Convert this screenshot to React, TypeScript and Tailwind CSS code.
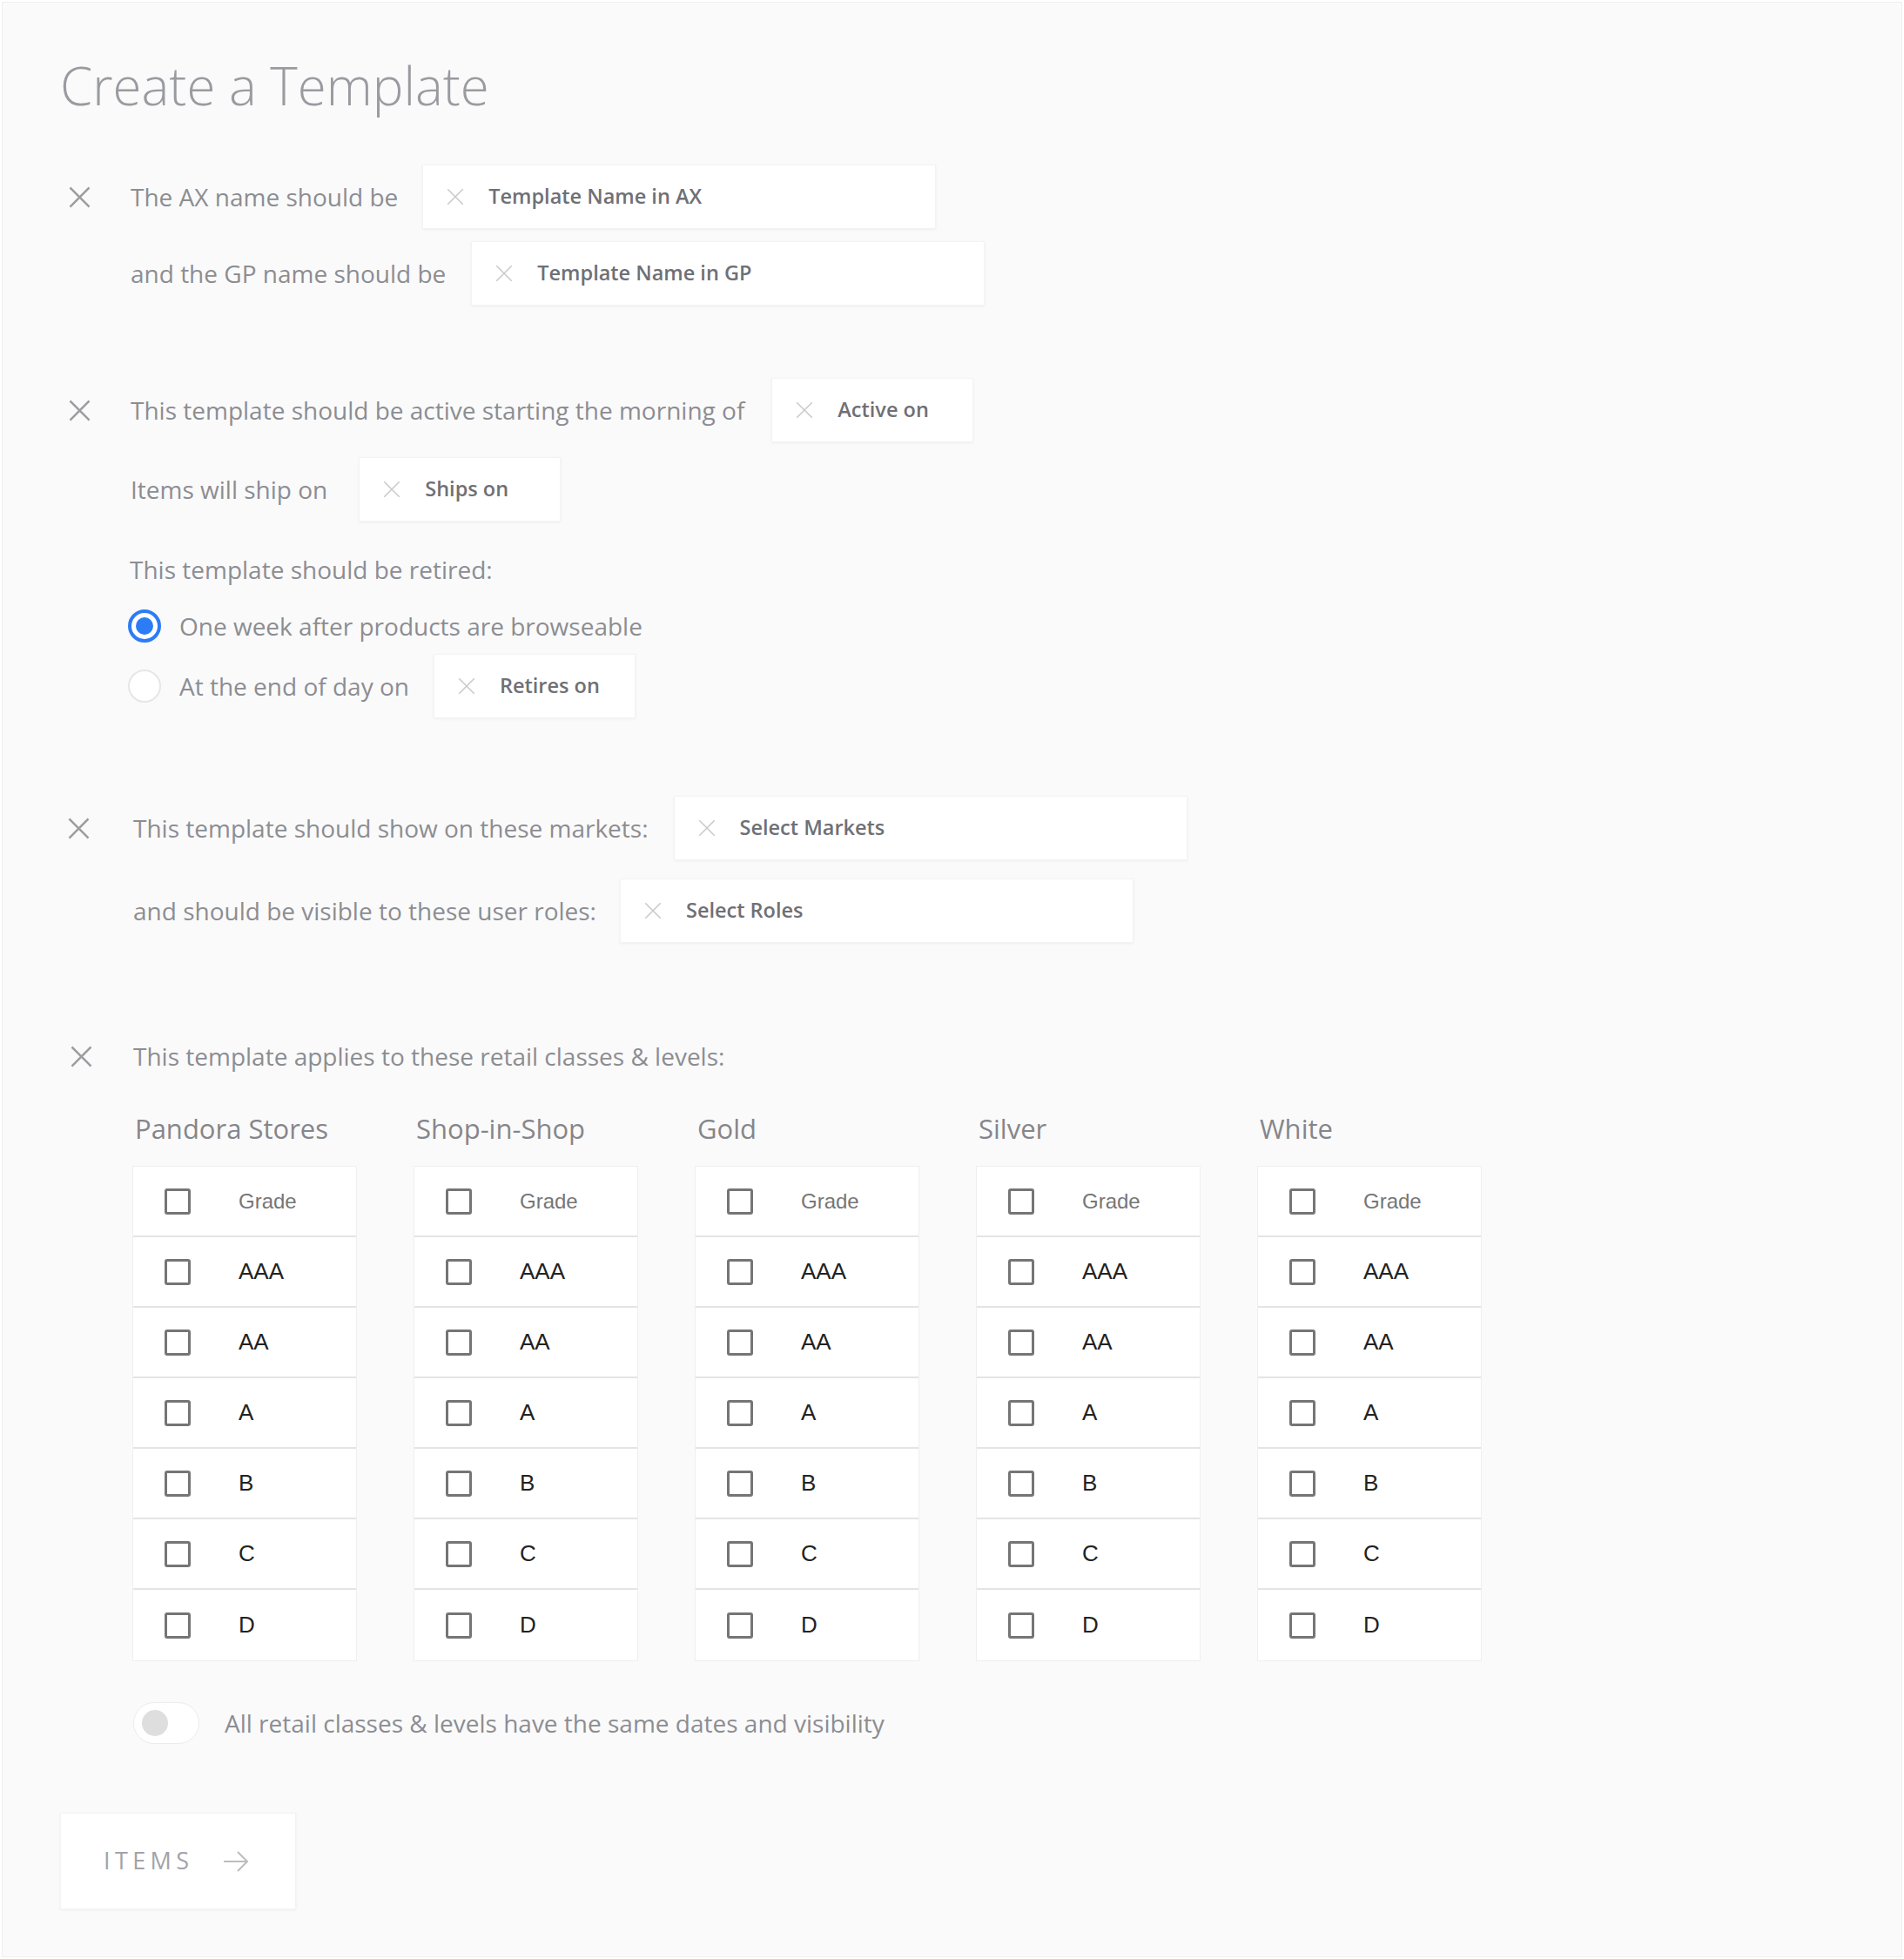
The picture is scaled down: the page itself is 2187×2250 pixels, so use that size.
import React from "react"

const sans = "font-['Open_Sans',sans-serif]"

function CrossIcon({ className }: { className?: string }) {
  return (
    <svg viewBox="0 0 24 24" className={className} fill="none" stroke="currentColor" strokeLinecap="square">
      <path d="M3 3 L21 21 M21 3 L3 21" />
    </svg>
  )
}

function Field({ label, width }: { label: string; width: string }) {
  return (
    <div className={`${width} h-[74px] bg-white flex items-center pl-[26px] shadow-[0_1px_3px_rgba(0,0,0,0.05)] border border-[#f3f3f3]`}>
      <CrossIcon className="w-[22px] h-[22px] text-[#c9c9cc] [stroke-width:1.6]" />
      <span className="ml-[27px] text-[23.5px] font-semibold text-[#6f7075]">{label}</span>
    </div>
  )
}

function SectionX({ pad }: { pad: string }) {
  return (
    <div className={`${pad} shrink-0 flex items-center`}>
      <CrossIcon className="w-[27px] h-[27px] text-[#9c9da1] [stroke-width:2.2]" />
    </div>
  )
}

const grades = ["AAA", "AA", "A", "B", "C", "D"]
const classes = ["Pandora Stores", "Shop-in-Shop", "Gold", "Silver", "White"]

function GradeTable({ title }: { title: string }) {
  return (
    <div className="w-[258px]">
      <div className="h-[40px] flex items-center pl-[3px] text-[31px] text-[#85868b]">{title}</div>
      <div className="mt-[23px] bg-white border border-[#efefef]">
        <div className="h-[81px] flex items-center pl-[36px] border-b-2 border-[#e4e4e4]">
          <span className="w-[30px] h-[30px] rounded-[3px] border-[3px] border-[#757575] shrink-0" />
          <span className="ml-[55px] text-[24px] text-[#767676] font-['Liberation_Sans',sans-serif]">Grade</span>
        </div>
        {grades.map((g, i) => (
          <div
            key={g}
            className={`h-[81px] flex items-center pl-[36px] ${i < grades.length - 1 ? "border-b-2 border-[#e4e4e4]" : ""}`}
          >
            <span className="w-[30px] h-[30px] rounded-[3px] border-[3px] border-[#757575] shrink-0" />
            <span className="ml-[55px] text-[26px] text-[#222] font-['Liberation_Sans',sans-serif]">{g}</span>
          </div>
        ))}
      </div>
    </div>
  )
}

export default function App() {
  return (
    <div className={`bg-white p-[2px] ${sans}`}>
      <div className="min-h-[2246px] bg-[#fafafa] border border-[#efefef] pl-[66px] pt-[59px] pb-[50px] text-[28px] text-[#8c8d92]">
        <h1 className="text-[60px] leading-[72px] font-light text-[#9a9ba0]">Create a Template</h1>

        {/* AX / GP names */}
        <div className="mt-[55px] h-[74px] flex items-center">
          <SectionX pad="w-[81px] pl-[9px]" />
          <span>The AX name should be</span>
          <div className="ml-[28px]">
            <Field label="Template Name in AX" width="w-[590px]" />
          </div>
        </div>
        <div className="mt-[14px] h-[74px] flex items-center pl-[81px]">
          <span>and the GP name should be</span>
          <div className="ml-[29px]">
            <Field label="Template Name in GP" width="w-[590px]" />
          </div>
        </div>

        {/* Dates */}
        <div className="mt-[83px] h-[74px] flex items-center">
          <SectionX pad="w-[81px] pl-[9px]" />
          <span>This template should be active starting the morning of</span>
          <div className="ml-[31px]">
            <Field label="Active on" width="w-[232px]" />
          </div>
        </div>
        <div className="mt-[17px] h-[74px] flex items-center pl-[81px]">
          <span>Items will ship on</span>
          <div className="ml-[36px]">
            <Field label="Ships on" width="w-[232px]" />
          </div>
        </div>
        <div className="mt-[35px] h-[40px] flex items-center pl-[80px]">This template should be retired:</div>
        <div className="mt-[25px] h-[40px] flex items-center pl-[78px]">
          <span className="w-[38px] h-[38px] rounded-full border-[4px] border-[#2c7cf6] bg-white flex items-center justify-center">
            <span className="w-[20px] h-[20px] rounded-full bg-[#2c7cf6]" />
          </span>
          <span className="ml-[21px]">One week after products are browseable</span>
        </div>
        <div className="mt-[12px] h-[74px] flex items-center pl-[78px]">
          <span className="w-[38px] h-[38px] rounded-full border-2 border-[#e6e6e6] bg-white" />
          <span className="ml-[21px]">At the end of day on</span>
          <div className="ml-[28px]">
            <Field label="Retires on" width="w-[232px]" />
          </div>
        </div>

        {/* Markets / roles */}
        <div className="mt-[89px] h-[74px] flex items-center">
          <SectionX pad="w-[84px] pl-[8px]" />
          <span>This template should show on these markets:</span>
          <div className="ml-[29px]">
            <Field label="Select Markets" width="w-[590px]" />
          </div>
        </div>
        <div className="mt-[21px] h-[74px] flex items-center pl-[84px]">
          <span>and should be visible to these user roles:</span>
          <div className="ml-[27px]">
            <Field label="Select Roles" width="w-[590px]" />
          </div>
        </div>

        {/* Retail classes */}
        <div className="mt-[110px] h-[40px] flex items-center">
          <SectionX pad="w-[84px] pl-[11px]" />
          <span>This template applies to these retail classes &amp; levels:</span>
        </div>
        <div className="mt-[43px] pl-[83px] flex gap-[65px]">
          {classes.map((c) => (
            <GradeTable key={c} title={c} />
          ))}
        </div>

        <div className="mt-[47px] pl-[84px] flex items-center">
          <span className="w-[76px] h-[48px] rounded-full bg-white border border-[#ececec] flex items-center pl-[9px]">
            <span className="w-[30px] h-[30px] rounded-full bg-[#dedede]" />
          </span>
          <span className="ml-[29px]">All retail classes &amp; levels have the same dates and visibility</span>
        </div>

        <button className="mt-[79px] w-[271px] h-[111px] bg-white shadow-[0_1px_3px_rgba(0,0,0,0.05)] border border-[#f3f3f3] flex items-center pl-[49px]">
          <span className="text-[27px] tracking-[0.2em] text-[#a2a3a8]">ITEMS</span>
          <svg viewBox="0 0 32 28" className="ml-[32px] w-[32px] h-[28px]" fill="none" stroke="#bdbdc1" strokeWidth="2">
            <path d="M2 14 H29 M18 3 L29 14 L18 25" />
          </svg>
        </button>
      </div>
    </div>
  )
}
